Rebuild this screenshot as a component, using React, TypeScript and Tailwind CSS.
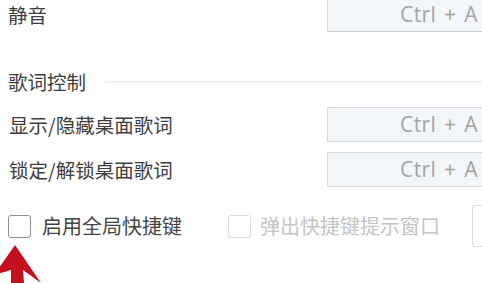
import React from "react";

const cjk = { fontFamily: '"Noto Sans CJK SC", "Noto Sans", sans-serif' };
const latin = { fontFamily: '"Open Sans", "Noto Sans", sans-serif' };

function KeyBox({ top = false }: { top?: boolean }) {
  return (
    <div
      className={`w-[165px] h-[35px] shrink-0 bg-[#f3f6f9] border border-[#d6dade] ${top ? "border-b-[#c6cacf]" : ""} flex items-center justify-end pr-[13px] text-[21px] tracking-[0.4px] [word-spacing:2px] text-[#a3a3a3] leading-none`}
      style={latin}
    >
      Ctrl + A
    </div>
  );
}

function Row({ label, className = "" }: { label: string; className?: string }) {
  return (
    <div className={`flex items-center ${className}`}>
      <div className="w-[327px] shrink-0 pl-[9px] text-[19.5px] text-[#3d3d3d] leading-none" style={cjk}>
        {label}
      </div>
      <KeyBox />
    </div>
  );
}

export default function App() {
  return (
    <div className="relative w-[482px] h-[283px] overflow-hidden bg-white">
      <div className="flex items-center mt-[-3px]">
        <div className="w-[327px] shrink-0 pl-[8px] text-[19.5px] text-[#3d3d3d] leading-none" style={cjk}>
          静音
        </div>
        <KeyBox top />
      </div>

      <div className="flex items-center h-[28px] mt-[36px]">
        <div className="pl-[8px] text-[19.5px] text-[#3d3d3d] leading-none shrink-0" style={cjk}>
          歌词控制
        </div>
        <div className="flex-1 ml-[19px] h-[2px] bg-[#f0f0f0]" />
      </div>

      <Row label="显示/隐藏桌面歌词" className="mt-[11px]" />
      <Row label="锁定/解锁桌面歌词" className="mt-[10px]" />

      <div className="flex items-center mt-[18px]">
        <div className="w-[228px] shrink-0 flex items-center pl-[8px]">
          <div className="w-[23px] h-[23px] rounded-[3px] border-[1.5px] border-[#8f8f8f] shrink-0" />
          <div className="ml-[11px] text-[20px] text-[#454545] leading-none whitespace-nowrap" style={cjk}>
            启用全局快捷键
          </div>
        </div>
        <div className="w-[244px] shrink-0 flex items-center">
          <div className="w-[23px] h-[23px] rounded-[3px] border-[1.5px] border-[#dcdcdc] shrink-0" />
          <div className="ml-[9px] text-[20px] text-[#c4c4c4] leading-none whitespace-nowrap" style={cjk}>
            弹出快捷键提示窗口
          </div>
        </div>
        <div className="w-[40px] h-[42px] shrink-0 border border-[#dcdcdc] rounded-[2px]" />
      </div>

      <svg className="absolute left-0 top-0" width="482" height="283" viewBox="0 0 482 283">
        <polygon
          points="15,245 41,283 23,270 24,283 11,283 11,270 -6,275"
          fill="#c3101c"
        />
      </svg>
    </div>
  );
}
